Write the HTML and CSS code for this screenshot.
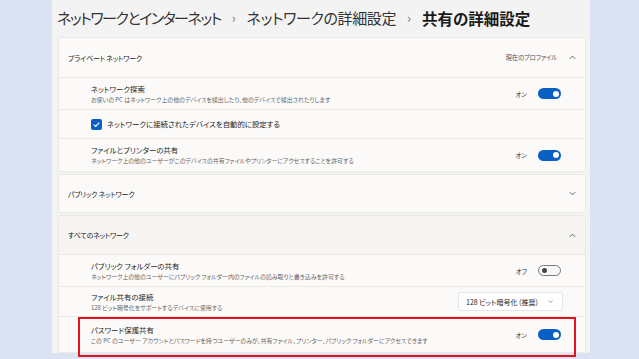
FILE: index.html
```html
<!DOCTYPE html>
<html lang="ja">
<head>
<meta charset="utf-8">
<link rel="stylesheet" href="styles.css">
</head>
<body>
<div class="window">
  <div class="crumbs">
    <span class="c1">ネットワークとインターネット</span>
    <span class="sep">›</span>
    <span class="c2">ネットワークの詳細設定</span>
    <span class="sep">›</span>
    <span class="cur">共有の詳細設定</span>
  </div>

  <div class="card c-private">
    <div class="head">
      <span class="head-title">プライベート ネットワーク</span>
      <span class="head-right">現在のプロファイル</span>
      <svg class="chev" viewBox="0 0 10 10"><path d="M2 6.5 L5 3.5 L8 6.5" /></svg>
    </div>
    <div class="row r1">
      <div class="txt">
        <div class="t">ネットワーク探索</div>
        <div class="d">お使いの PC はネットワーク上の他のデバイスを検出したり、他のデバイスで検出されたりします</div>
      </div>
      <span class="state">オン</span>
      <span class="toggle on"></span>
    </div>
    <div class="row r2">
      <span class="check"><svg viewBox="0 0 12 12"><path d="M3 6.2 L5.1 8.2 L9 4"/></svg></span>
      <span class="t">ネットワークに接続されたデバイスを自動的に設定する</span>
    </div>
    <div class="row r3">
      <div class="txt">
        <div class="t">ファイルとプリンターの共有</div>
        <div class="d">ネットワーク上の他のユーザーがこのデバイスの共有ファイルやプリンターにアクセスすることを許可する</div>
      </div>
      <span class="state">オン</span>
      <span class="toggle on"></span>
    </div>
  </div>

  <div class="card">
    <div class="head h2">
      <span class="head-title">パブリック ネットワーク</span>
      <svg class="chev" viewBox="0 0 10 10"><path d="M2 3.5 L5 6.5 L8 3.5" /></svg>
    </div>
  </div>

  <div class="card">
    <div class="head h3">
      <span class="head-title">すべてのネットワーク</span>
      <svg class="chev" viewBox="0 0 10 10"><path d="M2 6.5 L5 3.5 L8 6.5" /></svg>
    </div>
    <div class="row r4">
      <div class="txt">
        <div class="t">パブリック フォルダーの共有</div>
        <div class="d">ネットワーク上の他のユーザーにパブリック フォルダー内のファイルの読み取りと書き込みを許可する</div>
      </div>
      <span class="state">オフ</span>
      <span class="toggle off"></span>
    </div>
    <div class="row r5">
      <div class="txt">
        <div class="t">ファイル共有の接続</div>
        <div class="d">128 ビット暗号化をサポートするデバイスに使用する</div>
      </div>
      <span class="select"><span class="sel-text">128 ビット暗号化 (推奨)</span><svg class="chev small" viewBox="0 0 10 10"><path d="M2 3.5 L5 6.5 L8 3.5" /></svg></span>
    </div>
    <div class="row r6">
      <div class="txt">
        <div class="t">パスワード保護共有</div>
        <div class="d">この PC のユーザー アカウントとパスワードを持つユーザーのみが、共有ファイル、プリンター、パブリック フォルダーにアクセスできます</div>
      </div>
      <span class="state">オン</span>
      <span class="toggle on"></span>
      <div class="mark"></div>
    </div>
  </div>
</div>
</body>
</html>
```
FILE: styles.css
```css
* { box-sizing: border-box; }
html, body { margin: 0; padding: 0; }
body {
  width: 639px;
  height: 359px;
  background: #dbe3f3;
  overflow: hidden;
  font-family: "Noto Sans CJK JP", "Noto Sans", sans-serif;
  font-feature-settings: "palt";
  color: #1b1b1b;
}
.window {
  margin-left: 52px;
  width: 538px;
  height: 353px;
  background: #f3f3f3;
  padding: 0 4px 0 6px;
  display: flex;
  flex-direction: column;
  gap: 2px;
}
.window > * { flex-shrink: 0; }
.crumbs {
  height: 35px;
  display: flex;
  align-items: center;
  gap: 11px;
  color: #333;
  margin-left: -1px;
  white-space: nowrap;
}
.c1 { font-size: 15px; letter-spacing: -1.5px; }
.c2 { font-size: 15px; letter-spacing: -0.4px; }
.crumbs .sep { color: #777; font-size: 13px; }
.crumbs .cur { font-size: 15.5px; font-weight: 700; color: #1a1a1a; }

.card {
  background: #fbfaf8;
  border: 1px solid #ebe9e5;
  border-radius: 3px;
  display: flex;
  flex-direction: column;
}
.head {
  display: flex;
  align-items: center;
  padding: 0 8px 0 9px;
  font-size: 7px;
  letter-spacing: -0.2px;
  height: 39px;
}
.h2 { height: 37px; }
.h3 { height: 38px; background: #f6f5f1; }
.head-title { flex: 1; }
.head-right { color: #555; margin-right: 11px; font-size: 6.4px; }
.chev { width: 9px; height: 9px; fill: none; stroke: #555; stroke-width: 1; }
.row {
  position: relative;
  display: flex;
  align-items: center;
  padding: 0 24px 0 32px;
  border-top: 1px solid #ebe9e5;
}
.txt { flex: 1; display: flex; flex-direction: column; gap: 2px; }
.t { font-size: 7.4px; line-height: 10px; color: #1e1e1e; }
.d { font-size: 5.95px; line-height: 8px; color: #666; white-space: nowrap; }
.r1 { height: 32px; }
.r2 { height: 29px; }
.r3 { height: 33px; }
.r4 { height: 32px; }
.r5 { height: 30px; }
.r6 { height: 36px; }
.state { font-size: 6.5px; margin-right: 11px; color: #333; }
.toggle {
  position: relative;
  width: 23px;
  height: 11px;
  border-radius: 6px;
}
.toggle.on { background: #0a5fc4; }
.toggle.on::after {
  content: "";
  position: absolute;
  right: 2.5px;
  top: 2.5px;
  width: 6px;
  height: 6px;
  border-radius: 50%;
  background: #fff;
}
.toggle.off { border: 1px solid #777; background: #f7f7f7; }
.toggle.off::after {
  content: "";
  position: absolute;
  left: 2.5px;
  top: 2px;
  width: 5px;
  height: 5px;
  border-radius: 50%;
  background: #444;
}
.check {
  width: 11px;
  height: 11px;
  border-radius: 2px;
  background: #0a5fc4;
  margin-right: 5px;
  display: flex;
}
.check svg { width: 11px; height: 11px; fill: none; stroke: #fff; stroke-width: 1.3; }
.select {
  display: flex;
  align-items: center;
  width: 105px;
  height: 19px;
  margin-right: -2px;
  padding: 0 8px 0 7px;
  background: #fff;
  border: 1px solid #e6e6e6;
  border-radius: 3px;
  font-size: 7px;
  color: #222;
  white-space: nowrap;
}
.sel-text { flex: 1; }
.chev.small { width: 7px; height: 7px; stroke: #777; }
.mark {
  position: absolute;
  left: 19px;
  right: 9px;
  top: 0;
  height: 40px;
  border: 2px solid #e0141e;
}
```
